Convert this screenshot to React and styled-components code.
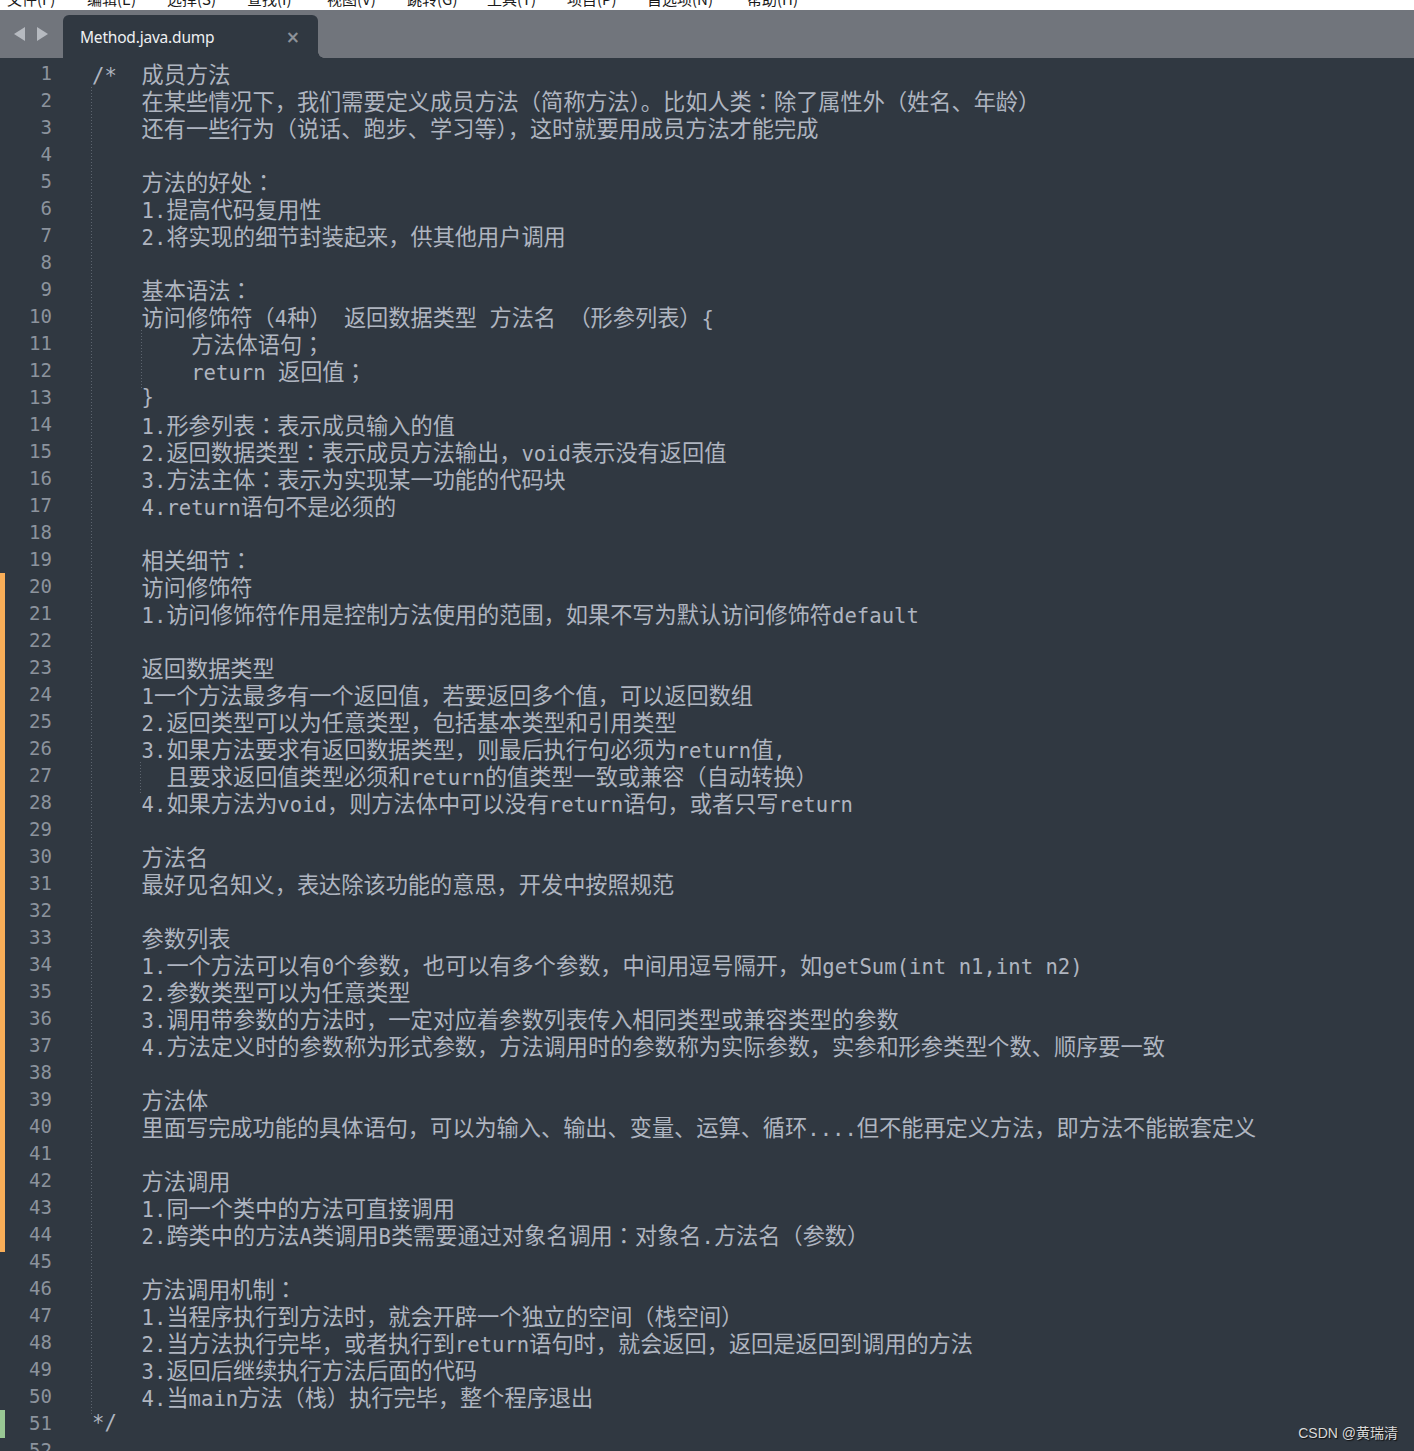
import React from 'react';
import styled, { createGlobalStyle } from 'styled-components';

const GlobalStyle = createGlobalStyle`
    html, body {
        margin: 0;
        padding: 0;
        height: 1451px;
        overflow: hidden;
        background: #303841;
    }
`;

const Page = styled.div`
    position: relative;
    width: 1414px;
    height: 1451px;
    overflow: hidden;
    background: #303841;
`;

const MenuStrip = styled.div`
    height: 10px;
    background: #ffffff;
    overflow: hidden;
    display: flex;
    padding-left: 7px;
`;

const MenuItem = styled.span`
    display: block;
    width: ${p => p.$w || 82}px;
    margin-top: -11px;
    font-family: 'Noto Sans CJK SC', 'Liberation Sans', sans-serif;
    font-size: 15px;
    line-height: 20px;
    color: #1a1a1a;
    white-space: nowrap;
`;

const TabBar = styled.div`
    height: 48px;
    background: #71757c;
    display: flex;
    align-items: flex-end;
`;

const Arrows = styled.div`
    width: 63px;
    height: 48px;
    display: flex;
    align-items: center;
    padding-left: 14px;
    gap: 10px;
    box-sizing: border-box;
`;

const Tab = styled.div`
    position: relative;
    width: 255px;
    height: 43px;
    background: #303841;
    border-radius: 6px 6px 0 0;
    display: flex;
    align-items: center;
    justify-content: space-between;
    padding: 0 18px 0 17px;
    box-sizing: border-box;

    &::after {
        content: '';
        position: absolute;
        right: -6px;
        bottom: 0;
        width: 6px;
        height: 6px;
        background: radial-gradient(circle at 100% 0, transparent 5.5px, #303841 6px);
    }
`;

const TabTitle = styled.span`
    font-family: 'Noto Sans', 'Liberation Sans', sans-serif;
    font-size: 15.5px;
    color: #eef0f2;
    letter-spacing: -0.2px;
`;

const Close = styled.span`
    font-family: 'DejaVu Sans', sans-serif;
    font-size: 17px;
    font-weight: bold;
    color: #8d9299;
    margin-top: 1px;
`;

const Editor = styled.div`
    padding-top: 2px;
`;

const Row = styled.div`
    display: grid;
    grid-template-columns: 60px 1fr;
    height: 27px;
    line-height: 27px;
`;

const LineNo = styled.div`
    position: relative;
    text-align: right;
    padding-right: 8px;
    font-family: 'DejaVu Sans Mono', monospace;
    font-size: 19px;
    color: #8c939d;
    border-left: 5px solid ${p => p.$mark || 'transparent'};
`;

const Code = styled.div`
    position: relative;
    padding-left: 32px;
    white-space: pre;
    color: #afb5c0;
`;

const Guide = styled.span`
    position: absolute;
    top: 0;
    bottom: 0;
    left: ${p => p.$x}px;
    width: 1px;
    background: repeating-linear-gradient(to bottom, #5c646e 0 1px, transparent 1px 3px);
`;

const Ascii = styled.span`
    font-family: 'DejaVu Sans Mono', monospace;
    font-size: 20.6px;
`;

const Cjk = styled.span`
    font-family: 'Noto Sans CJK SC', 'Noto Sans', sans-serif;
    font-size: 22.2px;
`;

/* full-width colon / semicolon drawn centred in the cell */
const Punct = styled(Cjk)`
    font-family: 'Noto Sans CJK JP', 'Noto Sans CJK SC', sans-serif;
`;

const Watermark = styled.div`
    position: absolute;
    right: 16px;
    bottom: 9px;
    font-family: 'Liberation Sans', 'Noto Sans CJK SC', sans-serif;
    font-size: 14px;
    color: #d9d9d9;
    text-shadow: 1px 1px 1px #111;
`;

const menu = ['文件(F)', '编辑(E)', '选择(S)', '查找(I)', '视图(V)', '跳转(G)', '工具(T)', '项目(P)', '首选项(N)', '帮助(H)'];

const lines = [
    '/*  成员方法',
    '    在某些情况下，我们需要定义成员方法（简称方法）。比如人类：除了属性外（姓名、年龄）',
    '    还有一些行为（说话、跑步、学习等），这时就要用成员方法才能完成',
    '',
    '    方法的好处：',
    '    1.提高代码复用性',
    '    2.将实现的细节封装起来，供其他用户调用',
    '',
    '    基本语法：',
    '    访问修饰符（4种） 返回数据类型 方法名 （形参列表）{',
    '        方法体语句；',
    '        return 返回值；',
    '    }',
    '    1.形参列表：表示成员输入的值',
    '    2.返回数据类型：表示成员方法输出，void表示没有返回值',
    '    3.方法主体：表示为实现某一功能的代码块',
    '    4.return语句不是必须的',
    '',
    '    相关细节：',
    '    访问修饰符',
    '    1.访问修饰符作用是控制方法使用的范围，如果不写为默认访问修饰符default',
    '',
    '    返回数据类型',
    '    1一个方法最多有一个返回值，若要返回多个值，可以返回数组',
    '    2.返回类型可以为任意类型，包括基本类型和引用类型',
    '    3.如果方法要求有返回数据类型，则最后执行句必须为return值,',
    '      且要求返回值类型必须和return的值类型一致或兼容（自动转换）',
    '    4.如果方法为void，则方法体中可以没有return语句，或者只写return',
    '',
    '    方法名',
    '    最好见名知义，表达除该功能的意思，开发中按照规范',
    '',
    '    参数列表',
    '    1.一个方法可以有0个参数，也可以有多个参数，中间用逗号隔开，如getSum(int n1,int n2)',
    '    2.参数类型可以为任意类型',
    '    3.调用带参数的方法时，一定对应着参数列表传入相同类型或兼容类型的参数',
    '    4.方法定义时的参数称为形式参数，方法调用时的参数称为实际参数，实参和形参类型个数、顺序要一致',
    '',
    '    方法体',
    '    里面写完成功能的具体语句，可以为输入、输出、变量、运算、循环....但不能再定义方法，即方法不能嵌套定义',
    '',
    '    方法调用',
    '    1.同一个类中的方法可直接调用',
    '    2.跨类中的方法A类调用B类需要通过对象名调用：对象名.方法名（参数）',
    '',
    '    方法调用机制：',
    '    1.当程序执行到方法时，就会开辟一个独立的空间（栈空间）',
    '    2.当方法执行完毕，或者执行到return语句时，就会返回，返回是返回到调用的方法',
    '    3.返回后继续执行方法后面的代码',
    '    4.当main方法（栈）执行完毕，整个程序退出',
    '*/',
    '',
];

const kindOf = ch => {
    if (ch.charCodeAt(0) < 128) return 'ascii';
    if (ch === '：' || ch === '；') return 'punct';
    return 'cjk';
};

// split a line into runs of ascii / wide characters
const runs = text => {
    const out = [];
    for (const ch of text) {
        const kind = kindOf(ch);
        const last = out[out.length - 1];
        if (last && last.kind === kind) last.text += ch;
        else out.push({ kind, text: ch });
    }
    return out;
};

const markFor = n => {
    if (n >= 20 && n <= 44) return '#f9ae58';
    if (n === 51) return '#99c794';
    return null;
};

const guidesFor = n => {
    const g = [];
    if (n >= 2 && n <= 50) g.push(-1);
    if (n === 11 || n === 12) g.push(49);
    if (n === 27) g.push(48);
    return g;
};

const Run = ({ kind, text }) => {
    if (kind === 'ascii') return <Ascii>{text}</Ascii>;
    if (kind === 'punct') return <Punct>{text}</Punct>;
    return <Cjk>{text}</Cjk>;
};

const App = () => (
    <Page>
        <GlobalStyle />
        <MenuStrip>
            {menu.map((m, i) => (
                <MenuItem key={m} $w={i === 8 ? 100 : 80}>{m}</MenuItem>
            ))}
        </MenuStrip>
        <TabBar>
            <Arrows>
                <svg width="12" height="14" viewBox="0 0 12 14">
                    <polygon points="11,0 11,14 0,7" fill="#b6bac0" />
                </svg>
                <svg width="12" height="14" viewBox="0 0 12 14">
                    <polygon points="1,0 1,14 12,7" fill="#b6bac0" />
                </svg>
            </Arrows>
            <Tab>
                <TabTitle>Method.java.dump</TabTitle>
                <Close>×</Close>
            </Tab>
        </TabBar>
        <Editor>
            {lines.map((line, i) => {
                const n = i + 1;
                return (
                    <Row key={n}>
                        <LineNo $mark={markFor(n)}>{n}</LineNo>
                        <Code>
                            {guidesFor(n).map(x => <Guide key={x} $x={32 + x} />)}
                            {runs(line).map((r, j) => <Run key={j} {...r} />)}
                        </Code>
                    </Row>
                );
            })}
        </Editor>
        <Watermark>CSDN @黄瑞清</Watermark>
    </Page>
);

export default App;
